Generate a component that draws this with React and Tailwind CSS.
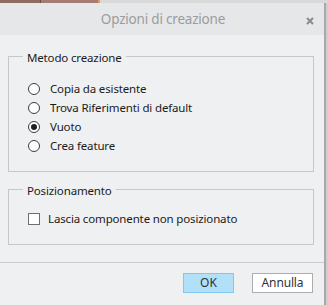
const font = { fontFamily: '"Noto Sans", "Open Sans", sans-serif' }

function Radio({ label, checked }) {
  return (
    <label className="flex h-[19px] items-center gap-[10px] pl-[19px]">
      <span className="flex h-[12px] w-[12px] items-center justify-center rounded-full border border-[#3c3c3c] bg-white">
        {checked && <span className="h-[6px] w-[6px] rounded-full bg-[#1f1f1f]" />}
      </span>
      <span className="text-[11.5px] leading-[16px] tracking-[-0.15px] text-[#1b1b1b]">{label}</span>
    </label>
  )
}

function Group({ title, className, children }) {
  return (
    <fieldset className={`mx-[8px] w-[306px] border border-[#c6c7c9] ${className}`}>
      <legend className="ml-[14px] px-[4px] pt-[4px] text-[11.5px] leading-[16px] tracking-[-0.15px] text-[#1b1b1b]">
        {title}
      </legend>
      {children}
    </fieldset>
  )
}

export default function App() {
  return (
    <div className="flex h-[305px] w-[328px] flex-col overflow-hidden bg-[#d3d3d3]" style={font}>
      <div className="flex h-[3px] shrink-0">
        <div className="w-[40px] bg-[#8d6c63]" />
        <div className="w-[1px] bg-[#6b5048]" />
        <div className="w-[57px] bg-[#a47c71]" />
        <div className="w-[2px] bg-[#e69a55]" />
        <div className="flex-1 bg-[#d9d9d9]" />
      </div>
      <div className="flex flex-1">
        <div className="flex w-[324px] flex-col bg-[#eff0f2]">
          <div className="relative flex h-[32px] shrink-0 items-center justify-center bg-[#e6e7e9]">
            <span className="pl-[2px] text-[13.5px] tracking-[-0.2px] text-[#9c9c9c]">Opzioni di creazione</span>
            <svg className="absolute right-[10px] top-[14px]" width="8" height="8" viewBox="0 0 8 8">
              <path d="M1 1L7 7M7 1L1 7" stroke="#8a8a8a" strokeWidth="2" />
            </svg>
          </div>

          <Group title="Metodo creazione" className="mt-[11px] pb-[16px]">
            <div className="flex flex-col pt-[13px]">
              <Radio label="Copia da esistente" />
              <Radio label="Trova Riferimenti di default" />
              <Radio label="Vuoto" checked />
              <Radio label="Crea feature" />
            </div>
          </Group>

          <Group title="Posizionamento" className="mt-[7px] pb-[16px]">
            <label className="box-content flex h-[19px] items-center gap-[8px] pl-[19px] pt-[10px]">
              <span className="h-[12px] w-[12px] border border-[#6e6e6e] bg-white" />
              <span className="text-[11.5px] leading-[16px] tracking-[-0.15px] text-[#1b1b1b]">
                Lascia componente non posizionato
              </span>
            </label>
          </Group>

          <div className="mt-[17px] h-[1px] bg-[#c9cacc]" />

          <div className="mt-[10px] flex justify-end gap-[18px] pr-[11px]">
            <button className="h-[20px] w-[51px] border border-[#7fc8ee] bg-[#b1e0f8] text-[12px] leading-[16px] text-[#333]">
              OK
            </button>
            <button className="h-[20px] w-[61px] border border-[#adadad] bg-white text-[12px] leading-[16px] tracking-[-0.15px] text-[#333]">
              Annulla
            </button>
          </div>
        </div>
        <div className="w-[2px] bg-[#a9a9a9]" />
        <div className="w-[2px] bg-[#cfcfcf]" />
      </div>
    </div>
  )
}
